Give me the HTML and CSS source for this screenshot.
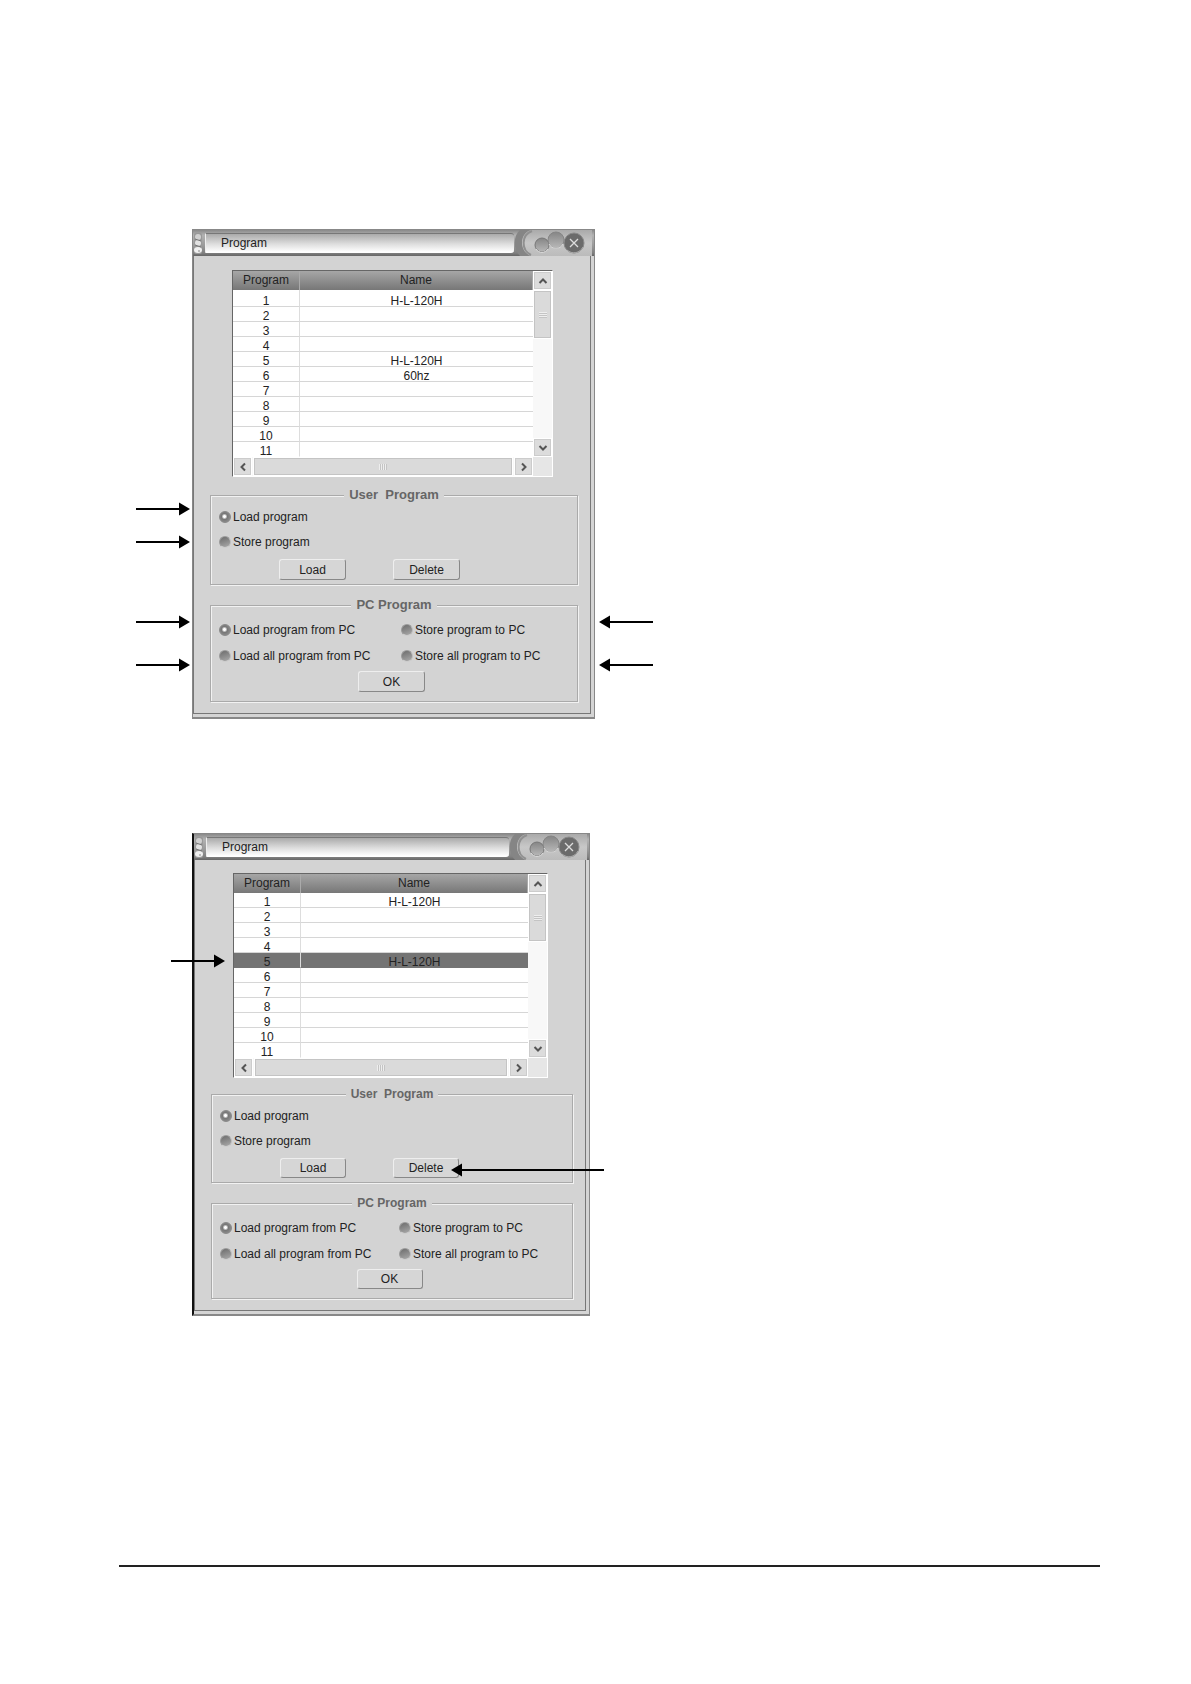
FILE: index.html
```html
<!DOCTYPE html>
<html lang="en">
<head>
    <meta charset="UTF-8">
    <meta name="viewport" content="width=device-width, initial-scale=1.0">
    <title>Program</title>
    <link rel="stylesheet" href="styles.css">
</head>
<body>
    <!-- shared shapes -->
    <svg class="defs" width="0" height="0" aria-hidden="true">
        <defs>
            <linearGradient id="pod" x1="0" y1="0" x2="0" y2="1">
                <stop offset="0" stop-color="#aaa"/>
                <stop offset="0.5" stop-color="#c8c8c8"/>
                <stop offset="1" stop-color="#bbb"/>
            </linearGradient>
            <linearGradient id="ball" x1="0" y1="0" x2="0" y2="1">
                <stop offset="0" stop-color="#858585"/>
                <stop offset="1" stop-color="#b8b8b8"/>
            </linearGradient>
            <symbol id="grip" viewBox="0 0 12 23">
                <rect x="1" y="1" width="8" height="21" rx="2" fill="#999"/>
                <ellipse cx="5" cy="5" rx="3" ry="3" fill="#d0d0d0"/>
                <ellipse cx="5" cy="11" rx="3" ry="3" fill="#e2e2e2"/>
                <ellipse cx="5" cy="18" rx="4" ry="3" fill="#f0f0f0"/>
                <path d="M2 7l6 2M2 13l6 2" stroke="#777"/>
                <path d="M5 19h2" stroke="#888"/>
            </symbol>
            <symbol id="caps" viewBox="0 0 80 26">
                <path d="M6 0C-1 6-1 19 6 26H18V0Z" fill="#858585"/>
                <path d="M17 0C5 3 5 22 17 26H78V0Z" fill="url(#pod)"/>
                <path d="M18 1C7 5 7 20 17 25" fill="none" stroke="#909090" stroke-width="2"/>
                <circle cx="28" cy="15" r="7" fill="url(#ball)" stroke="#777" stroke-width="1"/>
                <path d="M22 19a7 7 0 0 0 12 0" fill="none" stroke="#e0e0e0"/>
                <circle cx="42" cy="10" r="8" fill="url(#ball)" stroke="#858585" stroke-width="1"/>
                <path d="M35 14a8 8 0 0 0 14 0" fill="none" stroke="#e0e0e0"/>
                <circle cx="60" cy="13" r="10" fill="#6b6b6b" stroke="#898989"/>
                <path d="M53 20a10 10 0 0 0 16-3" fill="none" stroke="#aaa"/>
                <path d="M56 9l8 8M64 9l-8 8" stroke="#ddd" stroke-width="1.3"/>
            </symbol>
            <symbol id="chevron" viewBox="0 0 10 10">
                <path d="M1.500 7L5 3.500L8.500 7" fill="none" stroke="#555" stroke-width="2"/>
            </symbol>
            <symbol id="arrow" viewBox="0 0 54 14">
                <path d="M0 7H45" stroke="#000" stroke-width="2"/>
                <path d="M43 0.500L54 7L43 13.500Z"/>
            </symbol>
        </defs>
    </svg>

    <main class="page">
        <section class="figure">
            <div class="dialog">
                <div class="titlebar">
                    <svg class="grip"><use href="#grip"/></svg>
                    <div class="title">Program</div>
                    <svg class="caps"><use href="#caps"/></svg>
                </div>
                <div class="content">
                    <div class="listbox">
                        <table class="programs">
                            <thead>
                                <tr><th class="num">Program</th><th>Name</th></tr>
                            </thead>
                            <tbody>
                                <tr><td>1</td><td>H-L-120H</td></tr>
                                <tr><td>2</td><td></td></tr>
                                <tr><td>3</td><td></td></tr>
                                <tr><td>4</td><td></td></tr>
                                <tr><td>5</td><td>H-L-120H</td></tr>
                                <tr><td>6</td><td>60hz</td></tr>
                                <tr><td>7</td><td></td></tr>
                                <tr><td>8</td><td></td></tr>
                                <tr><td>9</td><td></td></tr>
                                <tr><td>10</td><td></td></tr>
                                <tr><td>11</td><td></td></tr>
                            </tbody>
                        </table>
                        <div class="vscroll">
                            <button class="sbtn" aria-label="Scroll up"><svg><use href="#chevron"/></svg></button>
                            <div class="thumb"><span class="ridges"></span></div>
                            <button class="sbtn end" aria-label="Scroll down"><svg class="down"><use href="#chevron"/></svg></button>
                        </div>
                        <div class="hscroll">
                            <button class="sbtn" aria-label="Scroll left"><svg class="left"><use href="#chevron"/></svg></button>
                            <div class="thumb"><span class="ridges"></span></div>
                            <button class="sbtn" aria-label="Scroll right"><svg class="right"><use href="#chevron"/></svg></button>
                        </div>
                    </div>

                    <fieldset class="group user">
                        <legend>User&nbsp; Program</legend>
                        <label class="choice"><input type="radio" name="user1" checked>Load program</label>
                        <label class="choice"><input type="radio" name="user1">Store program</label>
                        <div class="actions">
                            <button class="btn">Load</button>
                            <button class="btn">Delete</button>
                        </div>
                    </fieldset>

                    <fieldset class="group pc">
                        <legend>PC Program</legend>
                        <div class="choices">
                            <label class="choice"><input type="radio" name="pc1" checked>Load program from PC</label>
                            <label class="choice"><input type="radio" name="pc1">Store program to PC</label>
                            <label class="choice"><input type="radio" name="pc1">Load all program from PC</label>
                            <label class="choice"><input type="radio" name="pc1">Store all program to PC</label>
                        </div>
                        <div class="actions">
                            <button class="btn">OK</button>
                        </div>
                    </fieldset>
                </div>
            </div>
            <svg class="arrow load"><use href="#arrow"/></svg>
            <svg class="arrow store"><use href="#arrow"/></svg>
            <svg class="arrow from-pc"><use href="#arrow"/></svg>
            <svg class="arrow all-from-pc"><use href="#arrow"/></svg>
            <svg class="arrow back to-pc"><use href="#arrow"/></svg>
            <svg class="arrow back all-to-pc"><use href="#arrow"/></svg>
        </section>

        <section class="figure">
            <div class="dialog small">
                <div class="titlebar">
                    <svg class="grip"><use href="#grip"/></svg>
                    <div class="title">Program</div>
                    <svg class="caps"><use href="#caps"/></svg>
                </div>
                <div class="content">
                    <div class="listbox">
                        <table class="programs">
                            <thead>
                                <tr><th class="num">Program</th><th>Name</th></tr>
                            </thead>
                            <tbody>
                                <tr><td>1</td><td>H-L-120H</td></tr>
                                <tr><td>2</td><td></td></tr>
                                <tr><td>3</td><td></td></tr>
                                <tr><td>4</td><td></td></tr>
                                <tr class="selected"><td>5</td><td>H-L-120H</td></tr>
                                <tr><td>6</td><td></td></tr>
                                <tr><td>7</td><td></td></tr>
                                <tr><td>8</td><td></td></tr>
                                <tr><td>9</td><td></td></tr>
                                <tr><td>10</td><td></td></tr>
                                <tr><td>11</td><td></td></tr>
                            </tbody>
                        </table>
                        <div class="vscroll">
                            <button class="sbtn" aria-label="Scroll up"><svg><use href="#chevron"/></svg></button>
                            <div class="thumb"><span class="ridges"></span></div>
                            <button class="sbtn end" aria-label="Scroll down"><svg class="down"><use href="#chevron"/></svg></button>
                        </div>
                        <div class="hscroll">
                            <button class="sbtn" aria-label="Scroll left"><svg class="left"><use href="#chevron"/></svg></button>
                            <div class="thumb"><span class="ridges"></span></div>
                            <button class="sbtn" aria-label="Scroll right"><svg class="right"><use href="#chevron"/></svg></button>
                        </div>
                    </div>

                    <fieldset class="group user">
                        <legend>User&nbsp; Program</legend>
                        <label class="choice"><input type="radio" name="user2" checked>Load program</label>
                        <label class="choice"><input type="radio" name="user2">Store program</label>
                        <div class="actions">
                            <button class="btn">Load</button>
                            <button class="btn">Delete</button>
                        </div>
                    </fieldset>

                    <fieldset class="group pc">
                        <legend>PC Program</legend>
                        <div class="choices">
                            <label class="choice"><input type="radio" name="pc2" checked>Load program from PC</label>
                            <label class="choice"><input type="radio" name="pc2">Store program to PC</label>
                            <label class="choice"><input type="radio" name="pc2">Load all program from PC</label>
                            <label class="choice"><input type="radio" name="pc2">Store all program to PC</label>
                        </div>
                        <div class="actions">
                            <button class="btn">OK</button>
                        </div>
                    </fieldset>
                </div>
            </div>
            <svg class="arrow row5"><use href="#arrow"/></svg>
            <svg class="arrow-long" viewBox="0 0 153 14">
                <path d="M9 7H153" stroke="#000" stroke-width="2"/>
                <path d="M11 0.500L0 7L11 13.500Z"/>
            </svg>
        </section>
        <hr class="rule">
    </main>
</body>
</html>
```
FILE: styles.css
```css
* {
    box-sizing: border-box;
}
body {
    margin: 0;
    background: #fff;
    color: #222;
    font-family: "Liberation Sans", Arial, sans-serif;
    font-size: 12px;
}
button {
    font: inherit;
    color: inherit;
}
.defs {
    position: absolute;
}
.page {
    padding: 229px 91px 116px 119px;
}
.figure {
    position: relative;
    margin: 0 0 114px 73px;
}
.rule {
    height: 2px;
    margin: 249px 0 0;
    border: 0;
    background: #222;
}

/* window */
.dialog {
    width: 403px;
    max-width: 100%;
    padding-right: 3px;
    padding-bottom: 3px;
    border: 1px solid #888;
    border-bottom-width: 2px;
    background: #d4d4d4;
}
.dialog.small {
    width: 398px;
    border-left: 2px solid #111;
}
.titlebar {
    display: flex;
    align-items: center;
    height: 26px;
    margin-right: -3px;
    background: linear-gradient(#8a8a8a, #b2b2b2 20%, #9a9a9a 60%, #808080 88%, #666);
}
.grip {
    width: 12px;
    height: 23px;
}
.title {
    flex: 1;
    height: 20px;
    padding-left: 15px;
    line-height: 19px;
    border-top: 1px solid #777;
    border-left: 1px solid #eee;
    border-bottom: 1px solid #fff;
    border-radius: 0 3px 3px 0;
    background: linear-gradient(#aaa, #ddd 55%, #fff);
}
.caps {
    width: 80px;
    height: 26px;
}
.content {
    padding: 14px 12px 11px 16px;
    border: 1px solid #777;
    border-top: 0;
    background: #d3d3d3;
}
.small .content {
    padding-top: 13px;
}

/* program list */
.listbox {
    display: grid;
    grid-template-columns: 1fr 19px;
    margin: 0 25px 10px 22px;
    border: 1px solid #666;
    border-right-color: #fff;
    border-bottom-color: #fff;
    background: #e6e6e6;
}
.small .listbox {
    margin-bottom: 8px;
}
.programs {
    width: 100%;
    table-layout: fixed;
    border-spacing: 0;
    background: #fff;
    text-align: center;
}
.programs th {
    height: 19px;
    padding: 0;
    border-right: 1px solid #aaa;
    background: linear-gradient(#a6a6a6, #777);
    font-weight: normal;
    line-height: 19px;
}
.programs .num {
    width: 67px;
}
.programs td {
    height: 15px;
    padding: 4px 0 0;
    border-right: 1px solid #ddd;
    border-bottom: 1px solid #d6d6d6;
    line-height: 10px;
}
.programs tbody tr:first-child td {
    height: 17px;
    padding-top: 6px;
}
.small .programs tbody tr:first-child td {
    height: 15px;
    padding-top: 4px;
}
.programs tr:last-child td {
    border-bottom-color: #fff;
}
.programs td:last-child {
    border-right: 0;
}
.programs .selected td {
    background: #747474;
    border-bottom-color: #747474;
}
.vscroll {
    display: flex;
    flex-direction: column;
    background: #f8f8f8;
}
.hscroll {
    display: flex;
    gap: 1px;
    height: 19px;
    background: #f8f8f8;
}
.sbtn {
    display: flex;
    align-items: center;
    justify-content: center;
    flex: none;
    width: 19px;
    height: 19px;
    padding: 0;
    border: 1px solid #fff;
    outline: 1px solid #ccc;
    outline-offset: -2px;
    background: #dcdcdc;
}
.sbtn svg {
    width: 10px;
    height: 10px;
}
.sbtn.end {
    margin-top: auto;
}
.down {
    transform: rotate(180deg);
}
.left {
    transform: rotate(-90deg);
}
.right {
    transform: rotate(90deg);
}
.thumb {
    display: flex;
    align-items: center;
    justify-content: center;
    border: 1px solid #fff;
    outline: 1px solid #c4c4c4;
    outline-offset: -2px;
    background: #dadada;
}
.vscroll .thumb {
    height: 49px;
}
.hscroll .thumb {
    flex: 1;
}
.ridges {
    width: 8px;
    height: 6px;
    background: repeating-linear-gradient(#eee 0 1px, #c4c4c4 1px 2px);
}
.hscroll .ridges {
    background: repeating-linear-gradient(90deg, #eee 0 1px, #c4c4c4 1px 2px);
}

/* groups */
.group {
    min-width: 0;
    margin: 0;
    padding: 6px 8px 4px;
    border: 1px solid #aaa;
    box-shadow: 1px 1px #f2f2f2, inset 1px 1px #f2f2f2;
}
.group legend {
    margin: 0 auto;
    padding: 0 5px;
    background: #d3d3d3;
    color: #666;
    font-size: 13px;
    font-weight: bold;
    line-height: 16px;
}
.small legend {
    font-size: 12px;
}
.choice {
    display: flex;
    align-items: center;
    gap: 2px;
    height: 16px;
    line-height: 16px;
    white-space: nowrap;
}
.choice input {
    appearance: none;
    width: 12px;
    height: 12px;
    margin: 0;
    border: 1px solid #999;
    border-right-color: #bbb;
    border-bottom-color: #ccc;
    border-radius: 50%;
    background: linear-gradient(160deg, #6c6c6c, #aaa);
}
.choice input:checked {
    border-color: #888;
    background: radial-gradient(circle at 45% 45%, #fff 1px, #777 3px, #999);
}
.user .choice + .choice {
    margin-top: 9px;
}
.actions {
    display: flex;
    gap: 47px;
}
.user .actions {
    margin-top: 9px;
    padding-left: 60px;
}
.pc {
    margin-top: 12px;
    padding: 9px 8px;
}
.choices {
    display: grid;
    grid-template-columns: 13fr 12fr;
    row-gap: 10px;
}
.pc .actions {
    justify-content: center;
    margin-top: 7px;
    padding-right: 5px;
}
.btn {
    width: 67px;
    height: 21px;
    padding: 0;
    border: 1px solid #eee;
    border-right-color: #888;
    border-bottom-color: #888;
    border-radius: 3px;
    background: #d6d6d6;
    line-height: 18px;
}
.small .btn {
    width: 66px;
    height: 20px;
}

/* pointers over the figures */
.arrow {
    position: absolute;
    left: -56px;
    width: 54px;
    height: 14px;
}
.arrow.back {
    left: 407px;
    transform: rotate(180deg);
}
.load {
    top: 273px;
}
.store {
    top: 306px;
}
.from-pc,
.to-pc {
    top: 386px;
}
.all-from-pc,
.all-to-pc {
    top: 429px;
}
.arrow.row5 {
    left: -21px;
    top: 121px;
}
.arrow-long {
    position: absolute;
    left: 259px;
    top: 330px;
    width: 153px;
    height: 14px;
}
```
